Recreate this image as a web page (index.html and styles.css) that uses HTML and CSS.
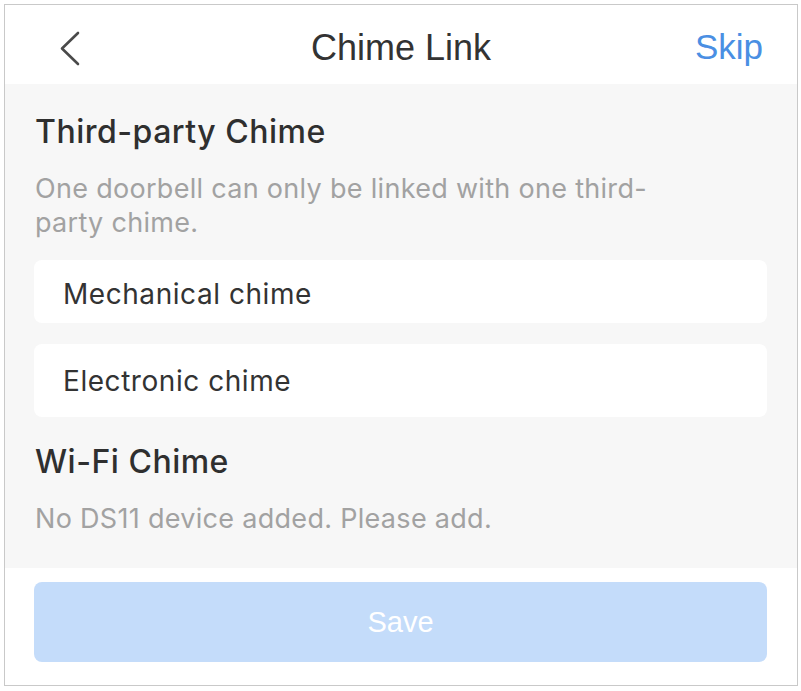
FILE: index.html
```html
<!DOCTYPE html>
<html lang="en">
<head>
<meta charset="utf-8">
<title>Chime Link</title>
<link rel="stylesheet" href="styles.css">
</head>
<body>
<div class="frame">
  <header class="topbar">
    <button class="back" aria-label="Back">
      <svg width="24" height="36" viewBox="0 0 24 36"><polyline points="19,2 3,17.5 19,33" fill="none" stroke="#4a4a4a" stroke-width="2.6" stroke-linecap="round" stroke-linejoin="round"/></svg>
    </button>
    <h1 class="title">Chime Link</h1>
    <a class="skip">Skip</a>
  </header>
  <main class="content">
    <h2 class="section-title">Third-party Chime</h2>
    <p class="hint hint-wrap">One doorbell can only be linked with one third-party chime.</p>
    <div class="option option-first">Mechanical chime</div>
    <div class="option option-second">Electronic chime</div>
    <h2 class="section-title section-title-second">Wi-Fi Chime</h2>
    <p class="hint">No DS11 device added. Please add.</p>
  </main>
  <footer class="footer">
    <button class="save">Save</button>
  </footer>
</div>
</body>
</html>
```
FILE: styles.css
```css
* { box-sizing: border-box; }
html, body { margin: 0; padding: 0; background: #ffffff; }
body { font-family: Inter, "Noto Sans", sans-serif; }

.frame {
  margin: 4px 3px 0 4px;
  width: 794px;
  height: 682px;
  border: 1px solid #c9c9c9;
  display: flex;
  flex-direction: column;
  background: #f7f7f7;
}

.topbar {
  height: 79px;
  background: #ffffff;
  display: grid;
  grid-template-columns: 1fr auto 1fr;
  align-items: center;
  padding: 4px 34px 0 34px;
}
.back {
  justify-self: start;
  border: 0;
  background: none;
  padding: 0;
  width: 24px;
  height: 36px;
  display: flex;
  margin: 4px 0 0 20px;
}
.title {
  margin: 0;
  font-family: "Liberation Sans", Arial, sans-serif;
  font-weight: 400;
  font-size: 36px;
  color: #333333;
  line-height: 40px;
  padding-top: 3px;
}
.skip {
  justify-self: end;
  font-family: "Liberation Sans", Arial, sans-serif;
  font-size: 35px;
  color: #4a8fe3;
  line-height: 40px;
}

.content {
  flex: 1;
  padding: 28px 30px 0 29px;
}
.section-title {
  margin: 0 0 0 1px;
  font-size: 32px;
  font-weight: 500;
  line-height: 40px;
  letter-spacing: 0.5px;
  color: #2f2f2f;
}
.section-title-second {
  margin-top: 25px;
}
.hint {
  margin: 20px 0 0 1px;
  font-size: 27px;
  line-height: 34px;
  letter-spacing: 0.3px;
  color: #a2a2a2;
}
.hint-wrap { width: 640px; }

.option {
  background: #ffffff;
  border-radius: 8px;
  padding: 0 29px;
  display: flex;
  align-items: center;
  font-size: 28px;
  letter-spacing: 0.55px;
  color: #333333;
}
.option-first { height: 63px; margin-top: 20px; padding-top: 4px; }
.option-second { height: 73px; margin-top: 21px; }

.footer {
  height: 117px;
  background: #ffffff;
  padding: 14px 30px 0 29px;
}
.save {
  width: 100%;
  height: 80px;
  border: 0;
  border-radius: 8px;
  background: #c4dcfa;
  color: #ffffff;
  font-family: "Liberation Sans", Arial, sans-serif;
  font-size: 29px;
}
```
